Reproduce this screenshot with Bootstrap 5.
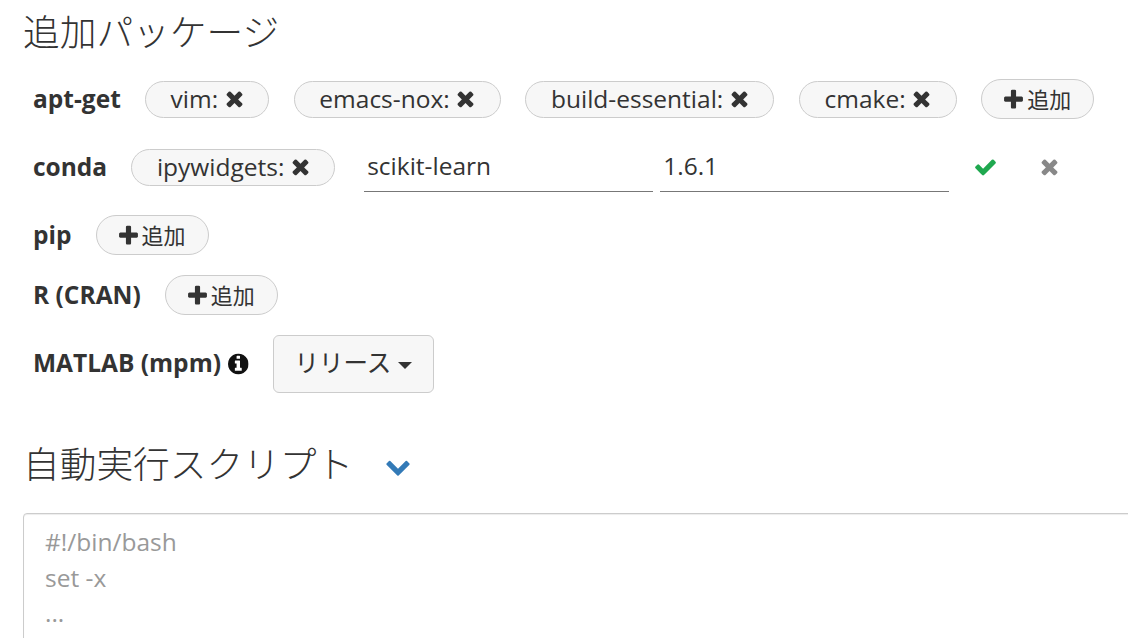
<!DOCTYPE html>
<html lang="ja">
<head>
<meta charset="utf-8">
<title>追加パッケージ</title>
<link href="https://cdn.jsdelivr.net/npm/bootstrap@5.3.0/dist/css/bootstrap.min.css" rel="stylesheet">
<style>
html,body{height:638px;overflow:hidden;background:#fff}
body{font-family:"Open Sans","Noto Sans CJK JP",sans-serif;font-size:24.5px;line-height:36px;color:#333}
.page-wrap{padding:0 0 0 23px;width:1400px}
.sect-title{font-family:"Open Sans","Noto Sans CJK JP",sans-serif;font-weight:300;font-size:36.7px;line-height:40px;color:#333;margin:0}
.first-title{padding-top:12px;height:65px}
.pkg-row{padding-left:10px}
.row-a{height:40px;margin-top:14px}
.row-b{height:44px;margin-top:26px}
.row-c{height:40px;margin-top:26px}
.row-d{height:40px;margin-top:20px}
.row-e{height:58px;margin-top:20px}
.row-e .pkg-label{padding-bottom:2px}
.pkg-label{font-weight:700;margin-right:24px;white-space:nowrap}
.pill{display:inline-flex;align-items:center;height:37px;padding:0 24.5px 0 24.75px;margin-right:24.5px;background:#f7f7f7;border:1px solid #ccc;border-radius:19px;white-space:nowrap;color:#333}
.ico{fill:currentColor;height:24px;flex:none}
.ico-x{width:19px;margin-left:6.5px;margin-top:2px}
.ico-plus{width:19px;margin-right:4px;margin-top:2px}
.add-btn{display:inline-flex;align-items:center;height:40px;padding:0 22px;background:#f7f7f7;border:1px solid #ccc;border-radius:20px;font-size:22px;color:#333;white-space:nowrap}
.pkg-field{width:289px;height:44px;border:0;border-bottom:1px solid #777;border-radius:0;padding:0 3px 8px;margin-right:7px;margin-top:6px;font:inherit;color:#333;outline:0;background:transparent}
.field-first{margin-left:4.25px}
.ok-ico{color:#1fa84f;width:23px;margin-left:18px}
.no-ico{color:#888;width:19px;margin-left:43px;margin-top:2px}
.info-ico{width:20.6px;margin-left:-17px;margin-right:24.4px;color:#111}
.rel-btn{display:inline-flex;align-items:center;height:58px;padding:0 21px 2px 20.5px;background:#f7f7f7;border:1px solid #ccc;border-radius:6px;color:#333;white-space:nowrap}
.rel-caret{width:0;height:0;border-left:7px solid transparent;border-right:7px solid transparent;border-top:7px solid #333;margin-left:7px;margin-top:5px}
.second-title{margin-top:51px;height:40px}
.chev{color:#337ab7;width:26px;height:26px;margin-left:31.5px;margin-top:4px}
.script-box{display:block;width:1300px;height:200px;margin-top:29px;padding:10.4px 21px;border:1px solid #ccc;border-radius:4px;box-shadow:inset 0 1px 1px rgba(0,0,0,.075);font:inherit;line-height:35.2px;color:#333;resize:none;outline:0}
.script-box::placeholder{color:#999;opacity:1}
</style>
</head>
<body>
<svg width="0" height="0" class="d-none" aria-hidden="true">
<symbol id="i-x" viewBox="0 0 1408 1792"><path d="M1298 1214q0 40-28 68l-136 136q-28 28-68 28t-68-28l-294-294-294 294q-28 28-68 28t-68-28l-136-136q-28-28-28-68t28-68l294-294-294-294q-28-28-28-68t28-68l136-136q28-28 68-28t68 28l294 294 294-294q28-28 68-28t68 28l136 136q28 28 28 68t-28 68l-294 294 294 294q28 28 28 68z"/></symbol>
<symbol id="i-plus" viewBox="192 0 1408 1792"><path d="M1600 736v192q0 40-28 68t-68 28h-416v416q0 40-28 68t-68 28h-192q-40 0-68-28t-28-68v-416h-416q-40 0-68-28t-28-68v-192q0-40 28-68t68-28h416v-416q0-40 28-68t68-28h192q40 0 68 28t28 68v416h416q40 0 68 28t28 68z"/></symbol>
<symbol id="i-check" viewBox="64 0 1664 1792"><path d="M1671 566q0 40-28 68l-724 724-136 136q-28 28-68 28t-68-28l-136-136-362-362q-28-28-28-68t28-68l136-136q28-28 68-28t68 28l294 295 656-657q28-28 68-28t68 28l136 136q28 28 28 68z"/></symbol>
<symbol id="i-chev" viewBox="0 0 1792 1792"><path d="M1683 808l-742 741q-19 19-45 19t-45-19l-742-741q-19-19-19-45.5t19-45.5l166-165q19-19 45-19t45 19l531 531 531-531q19-19 45-19t45 19l166 165q19 19 19 45.5t-19 45.5z"/></symbol>
<symbol id="i-info" viewBox="128 0 1536 1792"><path d="M1152 1376v-160q0-14-9-23t-23-9h-96v-512q0-14-9-23t-23-9h-320q-14 0-23 9t-9 23v160q0 14 9 23t23 9h96v320h-96q-14 0-23 9t-9 23v160q0 14 9 23t23 9h448q14 0 23-9t9-23zm-128-896v-160q0-14-9-23t-23-9h-192q-14 0-23 9t-9 23v160q0 14 9 23t23 9h192q14 0 23-9t9-23zm640 416q0 209-103 385.5t-279.5 279.5-385.5 103-385.5-103-279.5-279.5-103-385.5 103-385.5 279.5-279.5 385.5-103 385.5 103 279.5 279.5 103 385.5z"/></symbol>
</svg>
<div class="page-wrap">
  <h3 class="sect-title first-title">追加パッケージ</h3>

  <div class="pkg-row row-a d-flex align-items-center">
    <span class="pkg-label">apt-get</span>
    <span class="pill">vim:<svg class="ico ico-x"><use href="#i-x"/></svg></span>
    <span class="pill">emacs-nox:<svg class="ico ico-x"><use href="#i-x"/></svg></span>
    <span class="pill">build-essential:<svg class="ico ico-x"><use href="#i-x"/></svg></span>
    <span class="pill">cmake:<svg class="ico ico-x"><use href="#i-x"/></svg></span>
    <span class="add-btn"><svg class="ico ico-plus"><use href="#i-plus"/></svg>追加</span>
  </div>

  <div class="pkg-row row-b d-flex align-items-center">
    <span class="pkg-label">conda</span>
    <span class="pill">ipywidgets:<svg class="ico ico-x"><use href="#i-x"/></svg></span>
    <input class="pkg-field field-first" type="text" value="scikit-learn" aria-label="パッケージ">
    <input class="pkg-field" type="text" value="1.6.1" aria-label="バージョン">
    <svg class="ico ok-ico"><use href="#i-check"/></svg>
    <svg class="ico no-ico"><use href="#i-x"/></svg>
  </div>

  <div class="pkg-row row-c d-flex align-items-center">
    <span class="pkg-label">pip</span>
    <span class="add-btn"><svg class="ico ico-plus"><use href="#i-plus"/></svg>追加</span>
  </div>

  <div class="pkg-row row-d d-flex align-items-center">
    <span class="pkg-label">R (CRAN)</span>
    <span class="add-btn"><svg class="ico ico-plus"><use href="#i-plus"/></svg>追加</span>
  </div>

  <div class="pkg-row row-e d-flex align-items-center">
    <span class="pkg-label">MATLAB (mpm)</span>
    <svg class="ico info-ico"><use href="#i-info"/></svg>
    <span class="rel-btn">リリース<span class="rel-caret"></span></span>
  </div>

  <div class="second-title d-flex align-items-center">
    <h3 class="sect-title">自動実行スクリプト</h3>
    <svg class="ico chev"><use href="#i-chev"/></svg>
  </div>

  <textarea class="script-box" aria-label="自動実行スクリプト" placeholder="#!/bin/bash
set -x
..."></textarea>
</div>
<script src="https://cdn.jsdelivr.net/npm/bootstrap@5.3.0/dist/js/bootstrap.bundle.min.js"></script>
</body>
</html>
